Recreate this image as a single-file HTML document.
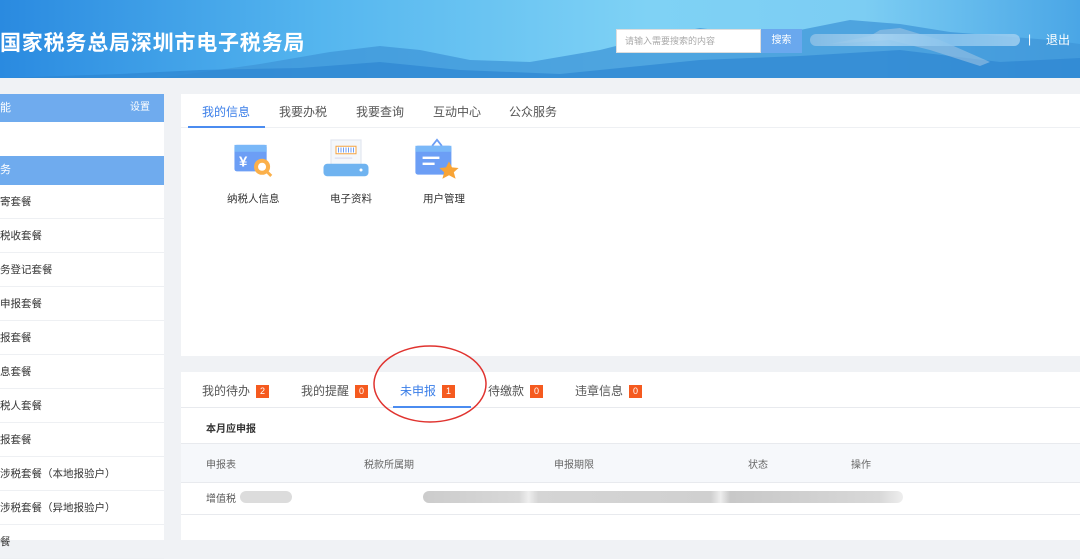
<!DOCTYPE html>
<html><head><meta charset="utf-8"><style>
*{margin:0;padding:0;box-sizing:border-box}
body{width:1080px;height:540px;overflow:hidden;background:#f0f2f5;font-family:"Liberation Sans","Noto Sans CJK SC",sans-serif;position:relative;font-size:11px;color:#333}
.abs{position:absolute}
.hdr{left:0;top:0;width:1080px;height:78px;background:linear-gradient(90deg,#2a8ae0 0%,#55b6ef 30%,#7fd2f5 60%,#7ccdf3 80%,#4aa6e6 100%);overflow:hidden}
.side{left:0;top:94px;width:164px;height:446px;background:#fff}
.item{position:absolute;left:0;width:164px;height:34px;border-bottom:1px solid #eef0f3;line-height:34px;font-size:10.5px;color:#333}
.badge{display:inline-block;background:#f55a1f;color:#fff;font-size:9px;width:13px;height:13px;line-height:13px;text-align:center;margin-left:6px;vertical-align:1px}
</style></head><body>
<div class="abs hdr">
<svg width="1080" height="78" style="position:absolute;left:0;top:0">
<path d="M160 78 L260 64 L330 52 L380 46 L420 50 L470 60 L530 62 L600 50 L640 40 L700 28 L760 36 L800 30 L850 20 L900 24 L950 32 L1000 36 L1050 40 L1080 44 L1080 78Z" fill="#3f95d8" opacity=".75"/>
<path d="M0 78 L120 74 L200 70 L300 68 L380 62 L460 70 L560 74 L700 60 L800 56 L900 50 L1000 62 L1080 58 L1080 78Z" fill="#2d86d2" opacity=".7"/>
<path d="M830 44 L870 36 L880 30 L900 28 L940 40 L990 62 L980 66 L930 50 L890 40 Z" fill="#9cc3e3" opacity=".6"/>
</svg>
<div class="abs" style="left:0;top:27px;font-size:21px;font-weight:bold;color:#fff;letter-spacing:0.8px">国家税务总局深圳市电子税务局</div>
<div class="abs" style="left:616px;top:29px;width:145px;height:24px;background:#fff;border:1px solid #ddd;font-size:9px;color:#aaa;line-height:22px;padding-left:8px">请输入需要搜索的内容</div>
<div class="abs" style="left:761px;top:29px;width:41px;height:24px;background:#6aa8ee;color:#fff;font-size:10px;line-height:24px;text-align:center">搜索</div>
<div class="abs" style="left:810px;top:34px;width:210px;height:12px;background:linear-gradient(90deg,#8cc0e6,#a8d4f2,#8dc6ee,#a0cff0);border-radius:6px;opacity:.85"></div>
<div class="abs" style="left:1028px;top:32px;color:#fff;font-size:12px">|</div>
<div class="abs" style="left:1046px;top:31px;color:#fff;font-size:12px">退出</div>
</div>

<div class="abs side">
<div class="abs" style="left:0;top:0;width:164px;height:28px;background:#6fabee;color:#fff;font-size:11px;line-height:28px">能<span style="position:absolute;right:14px;font-size:10px">设置</span></div>
<div class="abs" style="left:0;top:62px;width:164px;height:29px;background:#6fabee;color:#fff;font-size:11px;line-height:29px">务</div>
<div class="item" style="top:91px">寄套餐</div>
<div class="item" style="top:125px">税收套餐</div>
<div class="item" style="top:159px">务登记套餐</div>
<div class="item" style="top:193px">申报套餐</div>
<div class="item" style="top:227px">报套餐</div>
<div class="item" style="top:261px">息套餐</div>
<div class="item" style="top:295px">税人套餐</div>
<div class="item" style="top:329px">报套餐</div>
<div class="item" style="top:363px">涉税套餐（本地报验户）</div>
<div class="item" style="top:397px">涉税套餐（异地报验户）</div>
<div class="item" style="top:431px">餐</div>
</div>

<div class="abs" style="left:181px;top:94px;width:899px;height:262px;background:#fff">
<div class="abs" style="left:0;top:33px;width:899px;height:1px;background:#eef0f3"></div>
<div class="abs" style="left:7px;top:32px;width:77px;height:2px;background:#4b8cf0"></div>
<div class="abs" style="left:21px;top:9px;font-size:12px;color:#3a7ee8">我的信息</div>
<div class="abs" style="left:98px;top:9px;font-size:12px;color:#555">我要办税</div>
<div class="abs" style="left:175px;top:9px;font-size:12px;color:#555">我要查询</div>
<div class="abs" style="left:252px;top:9px;font-size:12px;color:#555">互动中心</div>
<div class="abs" style="left:328px;top:9px;font-size:12px;color:#555">公众服务</div>
<svg class="abs" style="left:50px;top:46px" width="46" height="42" viewBox="0 0 40 36"><rect x="3" y="4" width="28" height="23" rx="2" fill="#6c9ef5"/><rect x="3" y="4" width="28" height="6" fill="#7ab8f8"/><text x="7" y="23" fill="#fff" font-size="13" font-weight="bold" font-family="Liberation Sans">¥</text><circle cx="27" cy="23" r="7" fill="#fbb04a"/><circle cx="27" cy="23" r="3.5" fill="#fff"/><line x1="31" y1="27" x2="35" y2="31" stroke="#fbb04a" stroke-width="2.5"/></svg>
<svg class="abs" style="left:140px;top:42px" width="50" height="48" viewBox="0 0 40 38"><rect x="8" y="3" width="24" height="24" fill="#f4f7fb" stroke="#e3e8f0"/><rect x="12" y="8" width="16" height="6" fill="#fff" stroke="#f4a340" stroke-width=".8"/><path d="M14 9v4M16 9v4M18 9v4M20 9v4M22 9v4M24 9v4M26 9v4" stroke="#6c9ef5" stroke-width=".8"/><rect x="11" y="17" width="14" height="1" fill="#dde"/><rect x="2" y="22" width="36" height="10" rx="3" fill="#6fb3f0"/><circle cx="32" cy="27" r="1.2" fill="#fff"/></svg>
<svg class="abs" style="left:232px;top:42px" width="48" height="46" viewBox="0 0 40 38"><path d="M16 8 L20 3 L24 8" stroke="#6c9ef5" fill="none" stroke-width="1.5"/><rect x="2" y="8" width="30" height="24" rx="2" fill="#6c9ef5"/><rect x="2" y="8" width="30" height="5" fill="#7ab8f8"/><rect x="8" y="17" width="14" height="2" fill="#fff"/><rect x="8" y="22" width="10" height="2" fill="#fff"/><polygon points="30,21 32.5,26 38,26.5 34,30 35.5,35.5 30,32.5 24.5,35.5 26,30 22,26.5 27.5,26" fill="#f8a436"/></svg>
<div class="abs" style="left:46px;top:97px;font-size:10.5px">纳税人信息</div>
<div class="abs" style="left:149px;top:97px;font-size:10.5px">电子资料</div>
<div class="abs" style="left:242px;top:97px;font-size:10.5px">用户管理</div>
</div>

<div class="abs" style="left:181px;top:372px;width:899px;height:168px;background:#fff">
<div class="abs" style="left:0;top:35px;width:899px;height:1px;background:#e8eaee"></div>
<div class="abs" style="left:212px;top:34px;width:78px;height:2px;background:#4b8cf0"></div>
<div class="abs" style="left:21px;top:10px;font-size:12px;color:#555">我的待办<span class="badge">2</span></div>
<div class="abs" style="left:120px;top:10px;font-size:12px;color:#555">我的提醒<span class="badge">0</span></div>
<div class="abs" style="left:219px;top:10px;font-size:12px;color:#3a7ee8">未申报<span class="badge">1</span></div>
<div class="abs" style="left:307px;top:10px;font-size:12px;color:#555">待缴款<span class="badge">0</span></div>
<div class="abs" style="left:394px;top:10px;font-size:12px;color:#555">违章信息<span class="badge">0</span></div>
<div class="abs" style="left:25px;top:48px;font-size:10px;font-weight:bold;color:#333">本月应申报</div>
<div class="abs" style="left:0;top:71px;width:899px;height:40px;background:#f6f8fb;border-top:1px solid #e8eaee;border-bottom:1px solid #e8eaee"></div>
<div class="abs" style="left:25px;top:84px;font-size:10px;color:#666">申报表</div>
<div class="abs" style="left:183px;top:84px;font-size:10px;color:#666">税款所属期</div>
<div class="abs" style="left:373px;top:84px;font-size:10px;color:#666">申报期限</div>
<div class="abs" style="left:567px;top:84px;font-size:10px;color:#666">状态</div>
<div class="abs" style="left:670px;top:84px;font-size:10px;color:#666">操作</div>
<div class="abs" style="left:25px;top:118px;font-size:10px;color:#555">增值税</div>
<div class="abs" style="left:59px;top:119px;width:52px;height:12px;background:#dcdcdc;border-radius:6px"></div>
<div class="abs" style="left:242px;top:119px;width:480px;height:12px;background:linear-gradient(90deg,#ccc,#d8d8d8 20%,#eee 22%,#d5d5d5 24%,#d0d0d0 60%,#eee 62%,#c8c8c8 64%,#d8d8d8 95%,#eee);border-radius:6px"></div>
<div class="abs" style="left:0;top:142px;width:899px;height:1px;background:#e8eaee"></div>
</div>
<svg class="abs" style="left:0;top:0" width="1080" height="540"><ellipse cx="430" cy="384" rx="56" ry="38" fill="none" stroke="#e0332f" stroke-width="1.5"/></svg>
</body></html>
